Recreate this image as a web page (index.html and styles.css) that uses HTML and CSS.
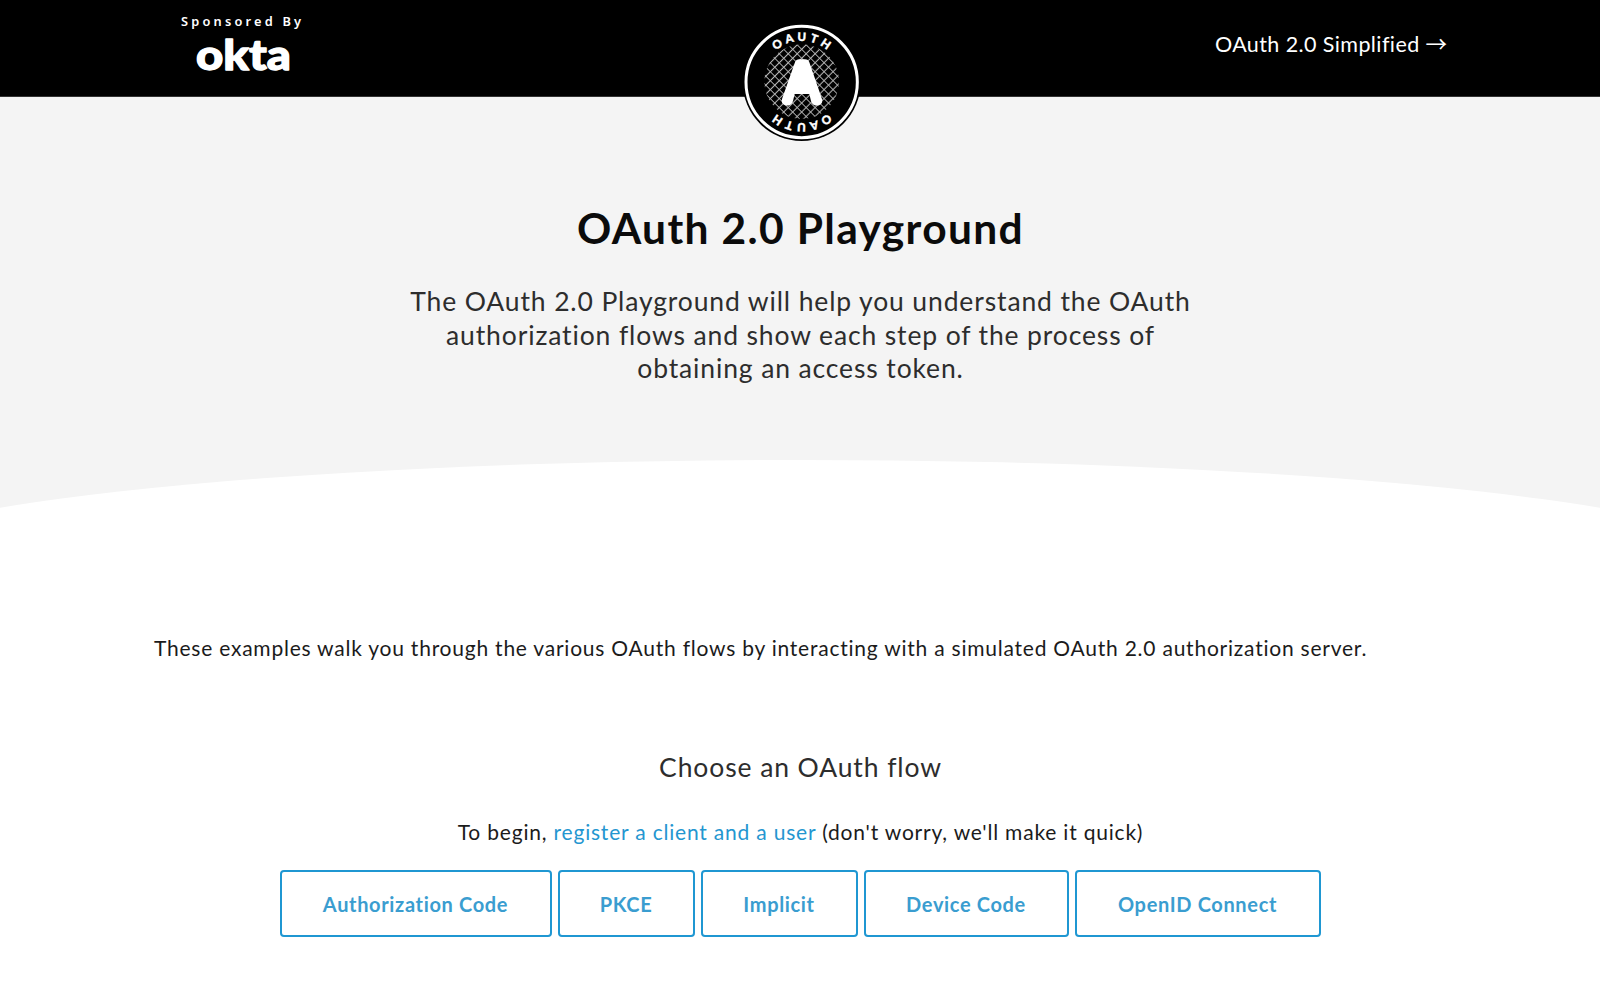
FILE: index.html
```html
<!DOCTYPE html>
<html lang="en">
<head>
<meta charset="utf-8">
<title>OAuth 2.0 Playground</title>
<link rel="stylesheet" href="styles.css">
</head>
<body>
<header class="topbar">
  <a class="sponsor">
    <span class="sponsor-label">Sponsored By</span>
    <svg class="okta" viewBox="0 0 102 54" width="102" height="54" role="img" aria-label="okta">
      <text class="okta-text" x="2" y="39" textLength="95" lengthAdjust="spacingAndGlyphs">okta</text>
    </svg>
  </a>
  <a class="nav-link">OAuth 2.0 Simplified <span class="arrow">→</span></a>
  <svg class="emblem" viewBox="0 0 405 405" width="135" height="135" role="img" aria-label="OAuth">
    <defs>
      <pattern id="mesh" width="19" height="19" patternUnits="userSpaceOnUse" patternTransform="translate(200 197) rotate(45)">
        <path class="mesh-line" d="M0 9.5H19M9.5 0V19"/>
      </pattern>
      <path id="arc-top" d="M78 200A122 122 0 0 1 322 200"/>
      <path id="arc-bottom" d="M322 202A122 122 0 0 1 78 202"/>
    </defs>
    <circle cx="200" cy="201" r="177"/>
    <circle class="ring" cx="200" cy="201" r="167"/>
    <circle cx="200" cy="200" r="112" fill="url(#mesh)"/>
    <path class="mark" d="M180 142Q183 133 193 133H210Q220 133 223 142L261 252Q264 264 255 269Q247 274 237 270Q231 267 228 258L223 237H179L174 258Q171 267 165 270Q155 274 147 269Q138 264 141 252Z"/>
    <text class="ring-text" text-anchor="middle"><textPath href="#arc-top" startOffset="51%">OAUTH</textPath></text>
    <text class="ring-text" text-anchor="middle"><textPath href="#arc-bottom" startOffset="51%">OAUTH</textPath></text>
  </svg>
</header>
<section class="hero">
  <h1 class="title">OAuth 2.0 Playground</h1>
  <p class="lead">The OAuth 2.0 Playground will help you understand the OAuth<br>authorization flows and show each step of the process of<br>obtaining an access token.</p>
  <svg class="curve" viewBox="0 0 1600 48" preserveAspectRatio="none"><ellipse cx="800" cy="107" rx="960" ry="107"/></svg>
</section>
<main class="content">
  <p class="intro">These examples walk you through the various OAuth flows by interacting with a simulated OAuth 2.0 authorization server.</p>
  <h2 class="subtitle">Choose an OAuth flow</h2>
  <p class="begin">To begin, <a class="link">register a client and a user</a> (don't worry, we'll make it quick)</p>
  <nav class="flows">
    <a class="button">Authorization Code</a>
    <a class="button">PKCE</a>
    <a class="button">Implicit</a>
    <a class="button">Device Code</a>
    <a class="button">OpenID Connect</a>
  </nav>
</main>
</body>
</html>
```
FILE: styles.css
```css
* { box-sizing: border-box; }
body {
  margin: 0;
  background: #fff;
  color: #1b1b1b;
  font-family: Lato, "Noto Sans", sans-serif;
}
h1, h2, p { margin: 0; font-weight: 400; }
.topbar {
  position: relative;
  display: flex;
  justify-content: space-between;
  height: 97px;
  padding: 0 153px 0 181px;
  border-bottom: 1px solid #333;
  background: #000;
  color: #fff;
}
.sponsor { display: flex; flex-direction: column; padding-top: 13px; }
.sponsor-label {
  font: 600 12.8px/16px "Noto Sans", sans-serif;
  letter-spacing: 3.2px;
}
.okta { display: block; overflow: visible; margin: 2px 0 0 13px; }
.okta-text { font: 900 42px/1 Lato, sans-serif; fill: #fff; stroke: #fff; stroke-width: 1.3; stroke-linejoin: round; }
.nav-link { padding-top: 31px; font-size: 21.5px; line-height: 26px; letter-spacing: 0.4px; white-space: nowrap; }
.arrow { font-family: "Noto Sans CJK SC", sans-serif; line-height: 1; letter-spacing: 0; }
.emblem { position: absolute; left: 735px; top: 15px; }
.mesh-line { fill: none; stroke: #b4b4b4; stroke-width: 3.3; }
.ring { fill: none; stroke: #fff; stroke-width: 9; }
.mark { fill: #fff; }
.ring-text { font: 900 35px Lato, sans-serif; letter-spacing: 10.5px; fill: #fff; stroke: #fff; stroke-width: 1; }
.hero {
  display: flex;
  flex-direction: column;
  align-items: center;
  height: 411px;
  padding-top: 105px;
  background: #f4f4f4;
  text-align: center;
}
.title { padding-left: 1px; color: #0b0b0b; font-size: 42.5px; font-weight: 700; line-height: 51px; letter-spacing: 1.35px; }
.lead { margin-top: 32px; padding-left: 1px; color: #2d2d2d; font-size: 26.5px; line-height: 33.6px; letter-spacing: 0.87px; white-space: nowrap; }
.curve { display: block; width: 100%; height: 48px; margin-top: auto; fill: #fff; }
.content { display: flex; flex-direction: column; align-items: center; padding: 127px 154px 0; }
.intro { align-self: flex-start; font-size: 21px; line-height: 26px; letter-spacing: 0.77px; white-space: nowrap; }
.subtitle { margin-top: 90px; padding-left: 1px; color: #2d2d2d; font-size: 26.5px; line-height: 32px; letter-spacing: 0.9px; }
.begin { margin-top: 36px; padding-left: 1px; font-size: 21px; line-height: 26px; letter-spacing: 0.8px; }
.link { color: #2496d0; }
.flows { display: grid; grid-template-columns: 272px 137px 157px 205px 246px; gap: 6px; margin-top: 25px; }
.button {
  display: flex;
  align-items: center;
  justify-content: center;
  height: 67px;
  border: 2px solid #1f97d2;
  border-radius: 4px;
  color: #3a9dd0;
  font-size: 20px;
  font-weight: 700;
  letter-spacing: 0.65px;
}
```
